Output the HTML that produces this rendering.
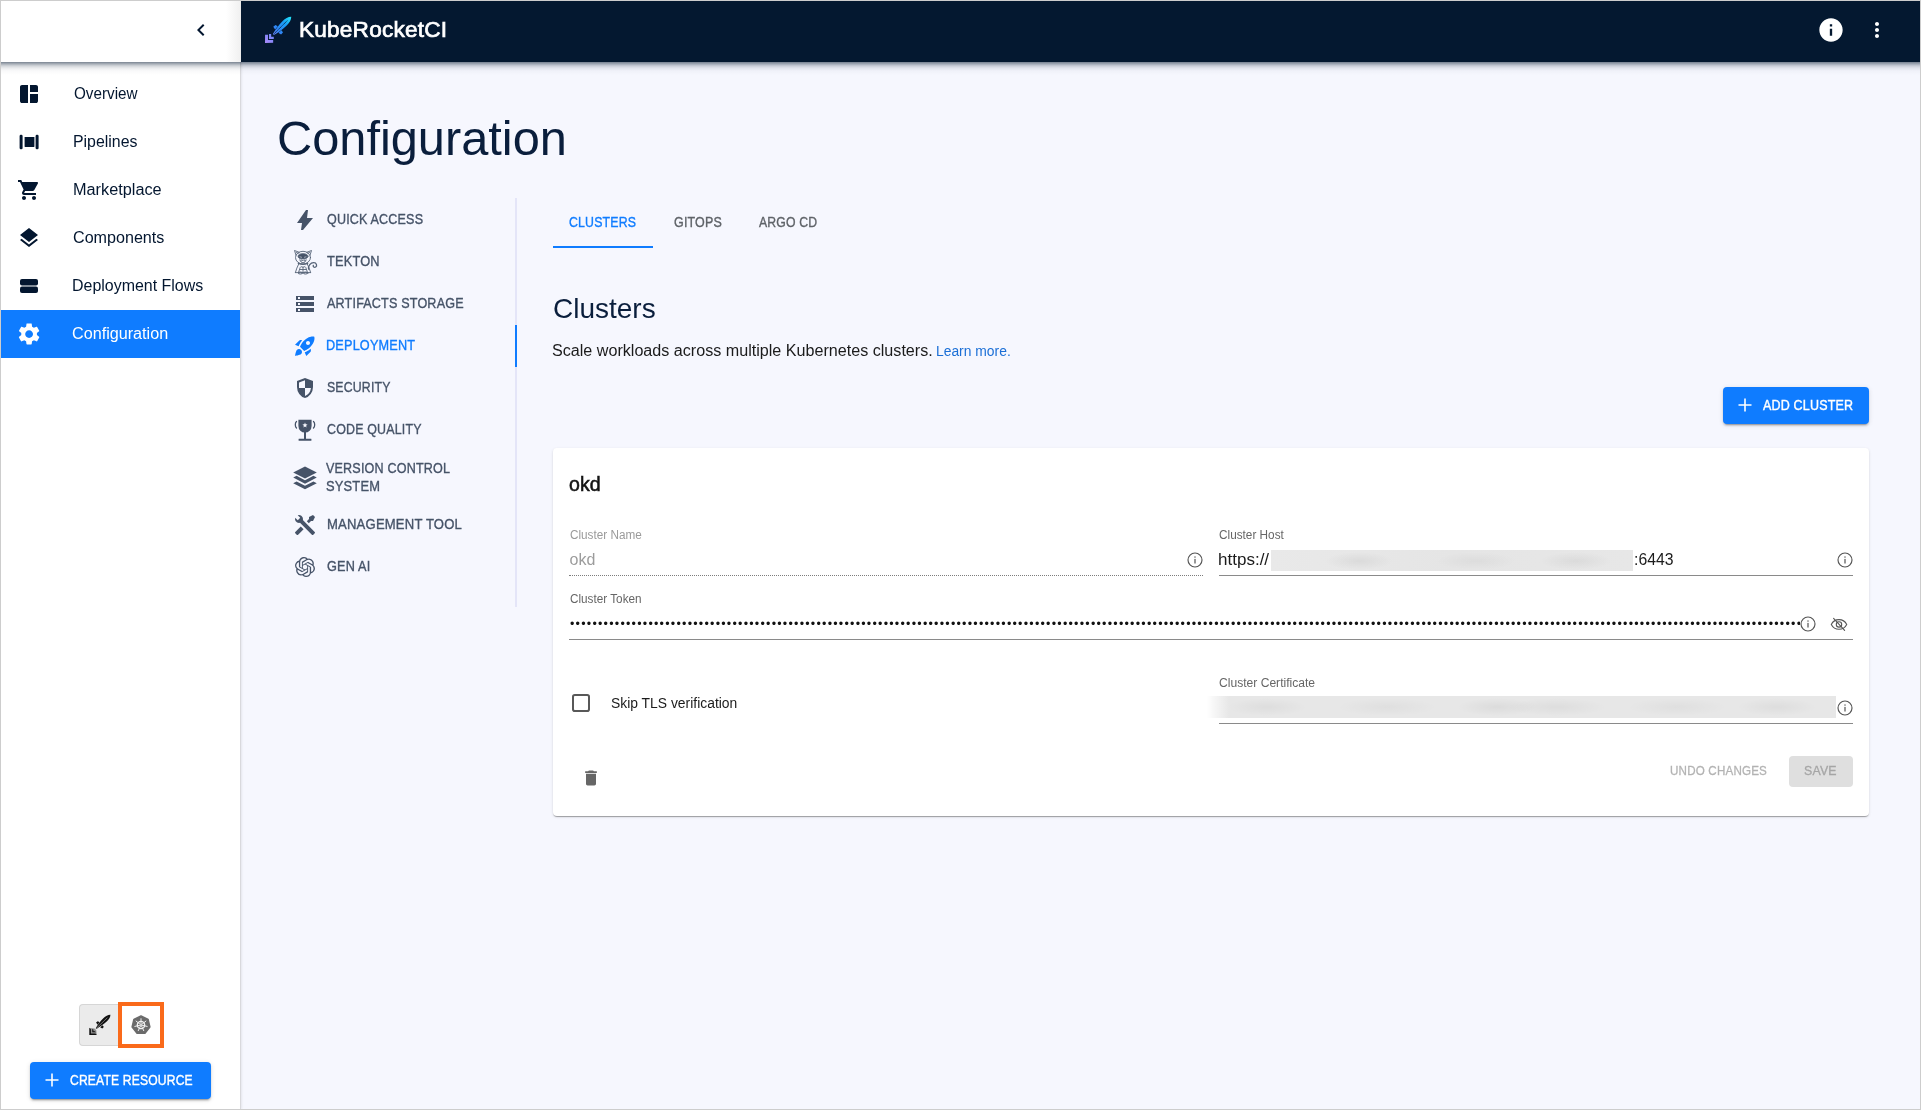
<!DOCTYPE html>
<html lang="en">
<head>
<meta charset="utf-8">
<title>KubeRocketCI - Configuration</title>
<style>
html,body{margin:0;padding:0;}
body{width:1921px;height:1110px;overflow:hidden;position:relative;background:#f6f7fe;font-family:"Liberation Sans",Arial,sans-serif;color:#0a1e3c;}
.abs{position:absolute;}
.t{position:absolute;white-space:nowrap;line-height:1;}
svg{display:block;}
/* frame */
#frame{position:absolute;left:0;top:0;width:1919px;height:1108px;border:1px solid #cdcdcd;pointer-events:none;z-index:50;}
/* sidebar */
#sidebar{position:absolute;left:1px;top:1px;width:239px;height:1108px;background:#fff;border-right:1px solid #d9d9dd;box-shadow:1px 0 2px rgba(0,0,0,.07);}
#sidehead{position:absolute;left:1px;top:1px;width:240px;height:61px;background:linear-gradient(90deg,#fff 0,#fff 225px,#f1f1f1 239px,#e4e4e4 240px);z-index:5;}
#appbar{position:absolute;left:241px;top:1px;width:1679px;height:61px;background:#041830;z-index:6;}
#hshadow{position:absolute;left:1px;top:62px;width:1919px;height:13px;z-index:7;pointer-events:none;background:linear-gradient(180deg,rgba(2,22,47,.53) 0,rgba(2,22,47,.43) 1px,rgba(2,22,47,.34) 2px,rgba(2,22,47,.25) 3px,rgba(2,22,47,.18) 4px,rgba(2,22,47,.13) 5px,rgba(2,22,47,.09) 6px,rgba(2,22,47,.06) 7px,rgba(2,22,47,.04) 8px,rgba(2,22,47,.025) 9px,rgba(2,22,47,.012) 11px,rgba(2,22,47,0) 13px);}
.nav{position:absolute;left:1px;width:239px;height:48px;}
.nav.active{background:#0f7cff;}
.nav svg{position:absolute;left:16px;top:12px;width:24px;height:24px;fill:#03162f;}
.nav.active svg{fill:#fff;}
.nav span{position:absolute;left:72px;top:0;height:48px;line-height:48px;font-size:16px;color:#03162f;white-space:nowrap;}
.nav.active span{color:#fff;}
/* sub menu */
.sm{position:absolute;left:277px;width:238px;height:42px;}
.sm svg{position:absolute;left:16px;top:10px;width:24px;height:24px;fill:#465368;}
.sm span{position:absolute;left:50px;top:0;height:42px;line-height:42px;font-size:14px;color:#465368;white-space:nowrap;letter-spacing:.2px;-webkit-text-stroke:.35px #465368;}
.sm.active span{color:#0f7cff;-webkit-text-stroke:.35px #0f7cff;}
.sm.active svg{fill:#0f7cff;}
.tab{position:absolute;top:198px;height:48px;line-height:48px;font-size:14px;color:#5f6368;letter-spacing:.2px;-webkit-text-stroke:.35px #5f6368;white-space:nowrap;}
.tab.active{color:#0f7cff;-webkit-text-stroke:.35px #0f7cff;}
.btn{position:absolute;background:#0f7cff;border-radius:4px;color:#fff;box-shadow:0 3px 1px -2px rgba(0,0,0,.2),0 2px 2px 0 rgba(0,0,0,.14),0 1px 5px 0 rgba(0,0,0,.12);}
.btn span{position:absolute;top:0;white-space:nowrap;font-size:14px;letter-spacing:.2px;-webkit-text-stroke:.4px #fff;}
#card{position:absolute;left:553px;top:448px;width:1316px;height:368px;background:#fff;border-radius:4px;box-shadow:0 2px 1px -1px rgba(0,0,0,.2),0 1px 1px 0 rgba(0,0,0,.14),0 1px 3px 0 rgba(0,0,0,.12);}
.lbl{position:absolute;font-size:12px;line-height:14px;height:14px;color:#666;white-space:nowrap;}
.val{position:absolute;font-size:16px;line-height:20px;height:20px;color:#1b1b1b;white-space:nowrap;}
.ul{position:absolute;height:1px;background:#8a8a8a;}
.ico{position:absolute;}
.fit{display:inline-block;transform-origin:0 50%;transform:scaleX(var(--k,1));}
.blur{position:absolute;background:#e9e9e9;}
</style>
</head>
<body>
<div id="root" style="position:absolute;left:0;top:0;width:1921px;height:1110px;will-change:transform;">

<!-- ============ SIDEBAR ============ -->
<div id="sidebar"></div>
<div id="sidehead">
  <svg class="abs" style="left:188px;top:17px" width="24" height="24" viewBox="0 0 24 24"><path fill="#03162f" d="M15.41 7.41 14 6l-6 6 6 6 1.41-1.41L10.83 12z"/></svg>
</div>

<div class="nav" style="top:70px">
  <svg viewBox="0 0 24 24"><path d="M5 21q-.825 0-1.413-.588T3 19V5q0-.825.588-1.413T5 3h6v18H5Zm8 0v-9h8v7q0 .825-.588 1.413T19 21h-6Zm0-11V3h6q.825 0 1.413.588T21 5v5h-8Z"/></svg>
  <span class="fit" id="n1" style="margin-left:0.5px;--k:0.9524">Overview</span>
</div>
<div class="nav" style="top:118px">
  <svg viewBox="0 0 24 24"><rect x="2.6" y="4.8" width="3" height="14.4" rx="1.3"/><rect x="7.6" y="7" width="9.8" height="10" rx=".4"/><rect x="18.6" y="4.8" width="3" height="14.4" rx="1.3"/></svg>
  <span class="fit" id="n2" style="margin-left:-0.5px;--k:0.9923">Pipelines</span>
</div>
<div class="nav" style="top:166px">
  <svg viewBox="0 0 24 24"><path d="M7 18c-1.1 0-1.99.9-1.99 2S5.9 22 7 22s2-.9 2-2-.9-2-2-2zM1 2v2h2l3.6 7.59-1.35 2.45c-.16.28-.25.61-.25.96 0 1.1.9 2 2 2h12v-2H7.42c-.14 0-.25-.11-.25-.25l.03-.12.9-1.63h7.45c.75 0 1.41-.41 1.75-1.03l3.58-6.49c.08-.14.12-.31.12-.48 0-.55-.45-1-1-1H5.21l-.94-2H1zm16 16c-1.1 0-1.99.9-1.99 2s.89 2 1.99 2 2-.9 2-2-.9-2-2-2z"/></svg>
  <span class="fit" id="n3" style="margin-left:-0.5px;--k:1.0174">Marketplace</span>
</div>
<div class="nav" style="top:214px">
  <svg viewBox="0 0 24 24"><path d="M11.99 18.54l-7.37-5.73L3 14.07l9 7 9-7-1.63-1.27-7.38 5.74zM12 16l7.36-5.73L21 9l-9-7-9 7 1.63 1.27L12 16z"/></svg>
  <span class="fit" id="n4" style="margin-left:-0.4px;--k:1.0068">Components</span>
</div>
<div class="nav" style="top:262px">
  <svg viewBox="0 0 24 24"><rect x="3" y="5" width="18" height="6.4" rx="2"/><rect x="3" y="12.6" width="18" height="6.4" rx="2"/></svg>
  <span class="fit" id="n5" style="margin-left:-0.8px;--k:0.9969">Deployment Flows</span>
</div>
<div class="nav active" style="top:310px">
  <svg viewBox="0 0 24 24" style="left:14.900px;top:10.900px;width:26.200px;height:26.200px"><path d="M19.14 12.94c.04-.3.06-.61.06-.94 0-.32-.02-.64-.07-.94l2.03-1.58c.18-.14.23-.41.12-.61l-1.92-3.32c-.12-.22-.37-.29-.59-.22l-2.39.96c-.5-.38-1.03-.7-1.62-.94l-.36-2.54c-.04-.24-.24-.41-.48-.41h-3.84c-.24 0-.43.17-.47.41l-.36 2.54c-.59.24-1.13.57-1.62.94l-2.39-.96c-.22-.08-.47 0-.59.22L2.74 8.87c-.12.21-.08.47.12.61l2.03 1.58c-.05.3-.09.63-.09.94s.02.64.07.94l-2.03 1.58c-.18.14-.23.41-.12.61l1.92 3.32c.12.22.37.29.59.22l2.39-.96c.5.38 1.03.7 1.62.94l.36 2.54c.05.24.24.41.48.41h3.84c.24 0 .44-.17.47-.41l.36-2.54c.59-.24 1.13-.56 1.62-.94l2.39.96c.22.08.47 0 .59-.22l1.92-3.32c.12-.22.07-.47-.12-.61l-2.01-1.58zM12 15.6c-1.98 0-3.6-1.62-3.6-3.6s1.620-3.6 3.6-3.6 3.6 1.62 3.6 3.6-1.62 3.6-3.6 3.6z"/></svg>
  <span class="fit" id="n6" style="margin-left:-0.8px;--k:1.0106">Configuration</span>
</div>

<!-- bottom of sidebar -->
<div class="abs" style="left:79px;top:1004px;width:41px;height:42px;background:#ebebeb;border:1px solid #d6d6d6;border-right:none;border-radius:4px 0 0 4px;box-sizing:border-box;"></div>
<div class="abs" style="left:118px;top:1002px;width:46px;height:46px;border:4px solid #fa6a1a;box-sizing:border-box;background:#fff;"></div>
<svg class="abs" style="left:80px;top:1005px" width="40" height="40" viewBox="0 0 40 40"><g transform="translate(19.900 19.900) scale(0.800 0.769)"><g transform="rotate(45)">
<path fill="#111" d="M0-18.600C2.200-16.500 3-13 3-9.500C3-3.500 1.800 2.500.700 6.700L-.700 6.700C-1.800 2.500-3-3.500-3-9.500C-3-13-2.200-16.500 0-18.600Z"/>
<path fill="#111" d="M2.700-2.200L5.300-1.600 5.500 1.300 2.300 1.900ZM-2.700-2.200L-5.300-1.600-5.500 1.300-2.300 1.900Z"/>
<path d="M0-13V6" stroke="#ebebeb" stroke-width=".800" stroke-dasharray="1.300 .500" fill="none"/>
<path fill="#909090" d="M0 18.400L-6.400 12-1.500 8H1.500L6.400 12Z"/><path fill="#111" d="M0 18.600L-6.600 12H-3.900L0 15.900 3.900 12H6.600ZM0 13.500L-3.200 10.300H-1.200L0 11.500 1.200 10.300H3.200Z"/>
</g></g></svg>
<svg class="abs" style="left:128.65px;top:1013.20px" width="24" height="24" viewBox="-12 -12 24 24"><polygon points="0.00,-9.10 7.11,-5.67 8.87,2.02 3.95,8.20 -3.95,8.20 -8.87,2.02 -7.11,-5.67" fill="#6b6b6b" stroke="#6b6b6b" stroke-width="1.500" stroke-linejoin="round"/><circle r="3.700" fill="none" stroke="#f1f1f1" stroke-width="1.300"/><path d="M0.00 -1.40L0.00 -6.30M1.09 -0.87L4.93 -3.93M1.36 0.31L6.14 1.40M0.61 1.26L2.73 5.68M-0.61 1.26L-2.73 5.68M-1.36 0.31L-6.14 1.40M-1.09 -0.87L-4.93 -3.93" stroke="#f1f1f1" stroke-width="1" stroke-linecap="round" fill="none"/><circle r="1" fill="#f1f1f1"/></svg>

<div class="btn" style="left:30px;top:1062px;width:181px;height:36.5px;">
  <svg class="abs" style="left:15px;top:11px" width="14" height="14" viewBox="0 0 14 14"><path d="M7 .5v13M.5 7h13" stroke="#fff" stroke-width="1.6" fill="none"/></svg>
  <span class="fit" id="cr" style="--k:0.8649;left:40.4px;height:36.5px;line-height:36.5px;">CREATE RESOURCE</span>
</div>

<!-- ============ APP BAR ============ -->
<div id="appbar">
  <svg class="abs" style="left:15px;top:9px" width="48" height="40" viewBox="0 0 48 40">
<defs><linearGradient id="lg" gradientUnits="userSpaceOnUse" x1="0" y1="18.400" x2="0" y2="-18.400"><stop offset="0" stop-color="#ae8bfa"/><stop offset=".3" stop-color="#6f86f8"/><stop offset=".5" stop-color="#2f86f5"/><stop offset=".75" stop-color="#189ff8"/><stop offset="1" stop-color="#25e6f7"/></linearGradient></defs>
<g transform="translate(22.100 19.800)"><g fill="url(#lg)"><g transform="rotate(45)">
<path fill="url(#lg)" d="M0-18.600C2.200-16.500 3-13 3-9.500C3-3.500 1.800 2.500.700 6.700L-.700 6.700C-1.800 2.500-3-3.500-3-9.500C-3-13-2.200-16.500 0-18.600Z"/>
<path fill="url(#lg)" d="M2.700-2.200L5.300-1.600 5.500 1.300 2.300 1.900ZM-2.700-2.200L-5.300-1.600-5.500 1.300-2.300 1.900Z"/>
<path d="M0-13V6" stroke="#03162f" stroke-width=".800" stroke-dasharray="1.300 .500" fill="none"/>
<path fill="url(#lg)" d="M0 18.500L-5.700 12.700-3.650 10.650 0 14.300 3.650 10.650 5.700 12.700ZM0 12.900L-3.400 9.500-1.850 7.950 0 9.800 1.850 7.950 3.400 9.500Z"/>
</g></g></g></svg>
  <span class="t fit" id="brand" style="--k:1.0274;left:58.0px;top:17px;font-size:22px;line-height:24px;color:#fff;-webkit-text-stroke:.7px #fff;letter-spacing:.2px;">KubeRocketCI</span>
  <svg class="abs" style="left:1576.200px;top:15.100px" width="28" height="28" viewBox="0 0 24 24"><path fill="#fff" d="M12 2C6.48 2 2 6.48 2 12s4.48 10 10 10 10-4.48 10-10S17.52 2 12 2zm1 15h-2v-6h2v6zm0-8h-2V7h2v2z"/></svg>
  <svg class="abs" style="left:1624px;top:17px" width="24" height="24" viewBox="0 0 24 24"><path fill="#fff" d="M12 8c1.1 0 2-.9 2-2s-.9-2-2-2-2 .9-2 2 .9 2 2 2zm0 2c-1.1 0-2 .9-2 2s.9 2 2 2 2-.9 2-2-.9-2-2-2zm0 6c-1.1 0-2 .9-2 2s.9 2 2 2 2-.9 2-2-.9-2-2-2z"/></svg>
</div>

<div id="hshadow"></div>

<!-- ============ MAIN ============ -->
<span class="t fit" id="title" style="--k:1.0153;left:276.7px;top:111px;font-size:48px;line-height:56px;color:#0a1e3c;">Configuration</span>

<!-- sub menu -->
<div class="abs" style="left:515px;top:198px;width:2px;height:409px;background:#e4e5f8;"></div>
<div class="abs" style="left:515px;top:325px;width:2px;height:42px;background:#0f7cff;"></div>

<div class="sm" style="top:198px;height:42px"><svg viewBox="0 0 24 24"><path d="m8 22l1-7H4l9-13h2l-1 8h6L10 22H8Z"/></svg><span class="fit" id="sm1" style="margin-left:-0.1px;--k:0.8954">QUICK ACCESS</span></div>
<div class="sm" style="top:240px;height:42px"><svg viewBox="0 0 24 24" style="fill:none;stroke:#566377;stroke-width:.900;stroke-linejoin:round;stroke-linecap:round;overflow:visible"><path d="M3 5.300L1.500.500 6.300 2.300M17 5.300L18.500.500 13.700 2.300M3.400 2.600L5.200 3.300M16.600 2.600L14.800 3.300"/><ellipse cx="10" cy="7.600" rx="7.500" ry="6.300"/><ellipse cx="10" cy="6.300" rx="4.900" ry="2.600" style="fill:#465368"/><path d="M7 6.800l1.600.500M13 6.800l-1.600.500" style="stroke:#c9cdd8;stroke-width:.700"/><path d="M6.900 9.700c.300 2 1.600 3 3.100 3s2.800-1 3.100-3" style="stroke-width:.900"/><circle cx="8.700" cy="10.400" r=".700" style="stroke-width:.600"/><circle cx="11.300" cy="10.400" r=".700" style="stroke-width:.600"/><path d="M5.300 13.300c3 1.300 6.400 1.300 9.400 0" style="stroke-width:1.300"/><path d="M5.600 14.200C4.400 16.500 3.200 19.500 2.400 22.400M14.400 14.200c1.200 2.300 2.400 5.300 3.200 8.200M2.400 22.600h15.200M7.200 17.500L5.500 22.500M12.800 17.500l1.700 5M8 16.500c1.300 1 2.700 1 4 0M10 17.200v5.200M7.200 19.500h5.600"/><ellipse cx="7.400" cy="23" rx="2.300" ry="1" style="stroke-width:1"/><ellipse cx="12.600" cy="23" rx="2.300" ry="1" style="stroke-width:1"/><path d="M15.600 19.200C15 15.800 17.500 12.600 20.800 12.700c2.800.100 3.600 3.200 1.900 4.300-1.400.900-2.900-.200-2.400-1.700" style="stroke-width:1.300"/></svg><span class="fit" id="sm2" style="margin-left:0.3px;--k:0.9140">TEKTON</span></div>
<div class="sm" style="top:282px;height:42px"><svg viewBox="0 0 24 24"><path d="M3 20v-4h18v4H3Zm2-1h2v-2H5v2ZM3 8V4h18v4H3Zm2-1h2V5H5v2Zm-2 7v-4h18v4H3Zm2-1h2v-2H5v2Z"/></svg><span class="fit" id="sm3" style="margin-left:0.3px;--k:0.8980">ARTIFACTS STORAGE</span></div>
<div class="sm active" style="top:324px;height:42px"><svg viewBox="0 0 24 24"><path d="M9.190 6.350c-2.040 2.290-3.440 5.580-3.570 5.890L2 10.690l4.050-4.050c.470-.470 1.150-.680 1.810-.550l1.330.260zM11.170 17s3.740-1.550 5.890-3.700c5.400-5.400 4.500-9.620 4.210-10.570-.950-.300-5.170-1.190-10.570 4.210C8.550 9.090 7 12.830 7 12.830L11.170 17zm6.480-2.190c-2.290 2.040-5.580 3.440-5.890 3.570L13.310 22l4.050-4.050c.470-.470.680-1.150.550-1.810l-.260-1.330zM9 18c0 .830-.340 1.580-.880 2.120C6.940 21.300 2 22 2 22s.700-4.940 1.880-6.120C4.420 15.340 5.170 15 6 15c1.660 0 3 1.340 3 3zm4-9c0-1.100.900-2 2-2s2 .900 2 2-.900 2-2 2-2-.900-2-2z"/></svg><span class="fit" id="sm4" style="margin-left:-1.1px;--k:0.9062">DEPLOYMENT</span></div>
<div class="sm" style="top:366px;height:42px"><svg viewBox="0 0 24 24"><path d="M12 22q-3.475-.875-5.738-3.988T4 11.100V5l8-3l8 3v6.100q0 3.800-2.263 6.913T12 22Zm0-2.100q2.425-.750 4.050-2.963T17.950 12H12V4.125l-6 2.250v5.175q0 .175.050.450H12v7.900Z"/></svg><span class="fit" id="sm5" style="margin-left:-0.1px;--k:0.8778">SECURITY</span></div>
<div class="sm" style="top:408px;height:42px"><svg viewBox="0 0 24 24"><path d="M5.400 1.700h13.200v6.300a6.600 6.600 0 0 1-13.200 0z"/><rect x="11" y="14" width="2" height="7"/><rect x="5.600" y="20.800" width="12.800" height="1.900" rx=".300"/><path d="M3.500 3.400c-1.600 1.400-1.600 5 0 6.600M20.500 3.400c1.600 1.400 1.600 5 0 6.600" style="fill:none;stroke:#465368;stroke-width:1.300;stroke-linecap:round"/><path style="fill:#f6f7fe" d="M12.00 4.60L12.68 6.37L14.57 6.47L13.09 7.66L13.59 9.48L12.00 8.45L10.41 9.48L10.91 7.66L9.43 6.47L11.32 6.37z"/></svg><span class="fit" id="sm6" style="margin-left:0.3px;--k:0.8879">CODE QUALITY</span></div>
<div class="sm" style="top:450px;height:53px"><svg style="top:16px" viewBox="0 0 24 24"><path d="M12 .400 23.800 6.500 12 12.600.200 6.500z"/><path d="M.200 11.600 3.600 9.800 12 14.200 20.400 9.800 23.800 11.600 12 17.700z"/><path d="M.200 17.200 3.600 15.400 12 19.800 20.400 15.400 23.800 17.200 12 23.300z"/></svg><span class="fit" id="sm7a" style="--k:0.8971;left:49.2px;top:9px;height:18px;line-height:18px;">VERSION CONTROL</span><span class="fit" id="sm7b" style="--k:0.9208;left:48.8px;top:27px;height:18px;line-height:18px;">SYSTEM</span></div>
<div class="sm" style="top:503px;height:42px"><svg viewBox="0 0 24 24"><path d="M21.710 20.290l-1.420 1.420a1 1 0 0 1-1.410 0L7 9.850A3.810 3.810 0 0 1 6 10a4 4 0 0 1-3.780-5.300l2.540 2.540.530-.530 1.420-1.420.530-.530L4.700 2.220A4 4 0 0 1 10 6a3.810 3.810 0 0 1-.150 1l11.860 11.880a1 1 0 0 1 0 1.410M2.290 18.880a1 1 0 0 0 0 1.410l1.420 1.420a1 1 0 0 0 1.410 0l5.470-5.460-2.830-2.830M20 2l-4 2v2l-2.170 2.170 2 2L18 8h2l2-4z"/></svg><span class="fit" id="sm8" style="margin-left:-0.4px;--k:0.9339">MANAGEMENT TOOL</span></div>
<div class="sm" style="top:545px;height:42px"><svg style="left:18.100px;top:11.600px;width:20px;height:20px" viewBox="0 0 24 24"><path d="M22.2819 9.8211a5.9847 5.9847 0 0 0-.5157-4.9108 6.0462 6.0462 0 0 0-6.5098-2.9A6.0651 6.0651 0 0 0 4.9807 4.1818a5.9847 5.9847 0 0 0-3.9977 2.9 6.0462 6.0462 0 0 0 .7427 7.0966 5.98 5.98 0 0 0 .511 4.9107 6.051 6.051 0 0 0 6.5146 2.9001A5.9847 5.9847 0 0 0 13.2599 24a6.0557 6.0557 0 0 0 5.7718-4.2058 5.9894 5.9894 0 0 0 3.9977-2.9001 6.0557 6.0557 0 0 0-.7475-7.0729zm-9.022 12.6081a4.4755 4.4755 0 0 1-2.8764-1.0408l.1419-.0804 4.7783-2.7582a.7948.7948 0 0 0 .3927-.6813v-6.7369l2.02 1.1686a.071.071 0 0 1 .038.052v5.5826a4.504 4.504 0 0 1-4.4945 4.4944zm-9.6607-4.1254a4.4708 4.4708 0 0 1-.5346-3.0137l.142.0852 4.783 2.7582a.7712.7712 0 0 0 .7806 0l5.8428-3.3685v2.3324a.0804.0804 0 0 1-.0332.0615L9.74 19.9502a4.4992 4.4992 0 0 1-6.1408-1.6464zM2.3408 7.8956a4.485 4.485 0 0 1 2.3655-1.9728V11.6a.7664.7664 0 0 0 .3879.6765l5.8144 3.3543-2.0201 1.1685a.0757.0757 0 0 1-.071 0l-4.8303-2.7865A4.504 4.504 0 0 1 2.3408 7.872zm16.5963 3.8558L13.1038 8.364 15.1192 7.2a.0757.0757 0 0 1 .071 0l4.8303 2.7913a4.4944 4.4944 0 0 1-.6765 8.1042v-5.6772a.79.79 0 0 0-.407-.667zm2.0107-3.0231l-.142-.0852-4.7735-2.7818a.7759.7759 0 0 0-.7854 0L9.409 9.2297V6.8974a.0662.0662 0 0 1 .0284-.0615l4.8303-2.7866a4.4992 4.4992 0 0 1 6.6802 4.66zM8.3065 12.863l-2.02-1.1638a.0804.0804 0 0 1-.038-.0567V6.0742a4.4992 4.4992 0 0 1 7.3757-3.4537l-.142.0805L8.704 5.459a.7948.7948 0 0 0-.3927.6813zm1.0976-2.3654l2.602-1.4998 2.6069 1.4998v2.9994l-2.5974 1.4997-2.6067-1.4997Z"/></svg><span class="fit" id="sm9" style="margin-left:-0.1px;--k:0.9066">GEN AI</span></div>

<!-- tabs -->
<span class="tab active fit" id="tb1" style="--k:0.88;left:569px;">CLUSTERS</span>
<span class="tab fit" id="tb2" style="--k:0.8907;left:673.9px;">GITOPS</span>
<span class="tab fit" id="tb3" style="--k:0.8749;left:759.3px;">ARGO CD</span>
<div class="abs" style="left:553px;top:246px;width:100px;height:2px;background:#0f7cff;"></div>

<span class="t fit" id="h1" style="left:553px;top:291px;font-size:28px;line-height:36px;color:#0a1e3c;">Clusters</span>
<span class="t fit" id="desc" style="--k:1.0074;left:552.2px;top:341px;font-size:16px;line-height:20px;color:#1b1b1b;">Scale workloads across multiple Kubernetes clusters.</span>
<span class="t fit" id="learn" style="--k:0.9900;left:936.0px;top:341px;font-size:14px;line-height:20px;color:#1b6fd6;">Learn more.</span>

<div class="btn" style="left:1723px;top:387px;width:146px;height:36.5px;">
  <svg class="abs" style="left:15px;top:11px" width="14" height="14" viewBox="0 0 14 14"><path d="M7 .5v13M.5 7h13" stroke="#fff" stroke-width="1.6" fill="none"/></svg>
  <span class="fit" id="ac" style="--k:0.8930;left:40.0px;height:36.5px;line-height:36.5px;">ADD CLUSTER</span>
</div>

<!-- card -->
<div id="card"></div>

<span class="t fit" id="okd" style="--k:0.9778;left:569.0px;top:472px;font-size:20px;line-height:24px;color:#141414;-webkit-text-stroke:.55px #141414;">okd</span>

<span class="lbl fit" id="l1" style="--k:0.9782;left:569.5px;top:528px;color:#9a9a9a;">Cluster Name</span>
<span class="val fit" id="v1" style="left:569.5px;top:550px;color:#9c9c9c;">okd</span>
<div class="abs" style="left:569px;top:575px;width:634px;height:0;border-top:1px dotted #7d7d7d;"></div>
<svg class="ico" style="left:1185.7px;top:550.8px" width="18" height="18" viewBox="0 0 18 18"><circle cx="9" cy="9" r="7" fill="none" stroke="#555" stroke-width="1.15"/><rect x="8.4" y="7.9" width="1.2" height="4.6" fill="#555"/><rect x="8.4" y="5.4" width="1.2" height="1.3" fill="#555"/></svg>

<span class="lbl fit" id="l2" style="--k:0.9819;left:1218.9px;top:528px;">Cluster Host</span>
<span class="val fit" id="v2a" style="--k:1.0638;left:1218.3px;top:550px;">https://</span>
<div class="blur" style="left:1271px;top:550px;width:362px;height:21px;background:radial-gradient(ellipse 34px 9px at 88px 11px,rgba(0,0,0,.055),rgba(0,0,0,0)),radial-gradient(ellipse 40px 9px at 205px 11px,rgba(0,0,0,.04),rgba(0,0,0,0)),radial-gradient(ellipse 36px 9px at 305px 11px,rgba(0,0,0,.05),rgba(0,0,0,0)),linear-gradient(90deg,#e9e9e9,#e5e5e5 50%,#e7e7e7);"></div>
<span class="val fit" id="v2b" style="--k:0.9849;left:1633.5px;top:550px;">:6443</span>
<div class="ul" style="left:1219px;top:575px;width:634px;"></div>
<svg class="ico" style="left:1835.7px;top:550.9px" width="18" height="18" viewBox="0 0 18 18"><circle cx="9" cy="9" r="7" fill="none" stroke="#555" stroke-width="1.15"/><rect x="8.4" y="7.9" width="1.2" height="4.6" fill="#555"/><rect x="8.4" y="5.4" width="1.2" height="1.3" fill="#555"/></svg>

<span class="lbl fit" id="l3" style="--k:0.9782;left:569.5px;top:592px;">Cluster Token</span>
<div class="abs" id="dots" style="left:570px;top:613px;width:1230px;height:22px;overflow:hidden;white-space:nowrap;font-size:12.5px;letter-spacing:1.225px;line-height:22px;color:#111;">••••••••••••••••••••••••••••••••••••••••••••••••••••••••••••••••••••••••••••••••••••••••••••••••••••••••••••••••••••••••••••••••••••••••••••••••••••••••••••••••••••••••••••••••••••••••••••••••••••••••••••••••••••••••••••••••••</div>
<div class="ul" style="left:569px;top:639px;width:1284px;"></div>
<svg class="ico" style="left:1799px;top:614.9px" width="18" height="18" viewBox="0 0 18 18"><circle cx="9" cy="9" r="7" fill="none" stroke="#555" stroke-width="1.15"/><rect x="8.4" y="7.9" width="1.2" height="4.6" fill="#555"/><rect x="8.4" y="5.4" width="1.2" height="1.3" fill="#555"/></svg>
<svg class="ico" style="left:1829px;top:614px" width="20" height="20" viewBox="0 0 20 20" fill="none" stroke="#555" stroke-width="1.1" stroke-linecap="round"><path d="M2.3 10.4C3.9 7.3 6.8 5.6 10 5.6s6.1 1.700 7.700 4.800C16.100 13.5 13.200 15.200 10 15.200S3.900 13.500 2.300 10.400z"/><circle cx="10" cy="10.400" r="2.700"/><path d="M4.600 4.400L15.600 16.400"/></svg>

<svg class="ico" style="left:569px;top:691px" width="24" height="24" viewBox="0 0 24 24"><rect x="4" y="4" width="16" height="16" rx="1.800" fill="none" stroke="#585858" stroke-width="2"/></svg>
<span class="t fit" id="skip" style="--k:0.9915;left:610.6px;top:693px;font-size:14px;line-height:20px;color:#1b1b1b;">Skip TLS verification</span>

<span class="lbl fit" id="l4" style="--k:1.0074;left:1219.3px;top:676px;">Cluster Certificate</span>
<div class="blur" style="left:1207px;top:696px;width:629px;height:22px;background:linear-gradient(90deg,#fff 0,rgba(255,255,255,.6) 8px,rgba(255,255,255,0) 22px),radial-gradient(ellipse 40px 9px at 60px 11px,rgba(0,0,0,.045),rgba(0,0,0,0)),radial-gradient(ellipse 50px 9px at 180px 11px,rgba(0,0,0,.035),rgba(0,0,0,0)),radial-gradient(ellipse 40px 9px at 290px 11px,rgba(0,0,0,.05),rgba(0,0,0,0)),radial-gradient(ellipse 50px 9px at 350px 11px,rgba(0,0,0,.045),rgba(0,0,0,0)),radial-gradient(ellipse 50px 9px at 470px 11px,rgba(0,0,0,.035),rgba(0,0,0,0)),radial-gradient(ellipse 40px 9px at 570px 11px,rgba(0,0,0,.045),rgba(0,0,0,0)),#e7e7e7;"></div>
<div class="ul" style="left:1219px;top:723px;width:634px;"></div>
<svg class="ico" style="left:1835.8px;top:698.8px" width="18" height="18" viewBox="0 0 18 18"><circle cx="9" cy="9" r="7" fill="none" stroke="#555" stroke-width="1.15"/><rect x="8.4" y="7.9" width="1.2" height="4.6" fill="#555"/><rect x="8.4" y="5.4" width="1.2" height="1.3" fill="#555"/></svg>

<svg class="ico" style="left:581px;top:768px" width="20" height="20" viewBox="0 0 24 24"><path fill="#666" d="M6 19c0 1.100.900 2 2 2h8c1.100 0 2-.900 2-2V7H6v12zM19 4h-3.500l-1-1h-5l-1 1H5v2h14V4z"/></svg>

<span class="t fit" id="undo" style="--k:0.8937;left:1670.4px;top:761px;font-size:13px;line-height:20px;color:#b3b3b3;letter-spacing:.2px;-webkit-text-stroke:.3px #b3b3b3;">UNDO CHANGES</span>
<div class="abs" style="left:1789px;top:756px;width:64px;height:31px;border-radius:4px;background:#dfdfdf;"></div>
<span class="t fit" id="save" style="--k:0.9468;left:1804.4px;top:761px;font-size:13px;line-height:20px;color:#a6a6a6;letter-spacing:.2px;-webkit-text-stroke:.3px #a6a6a6;">SAVE</span>


<div id="frame"></div>
</div>
</body>
</html>
